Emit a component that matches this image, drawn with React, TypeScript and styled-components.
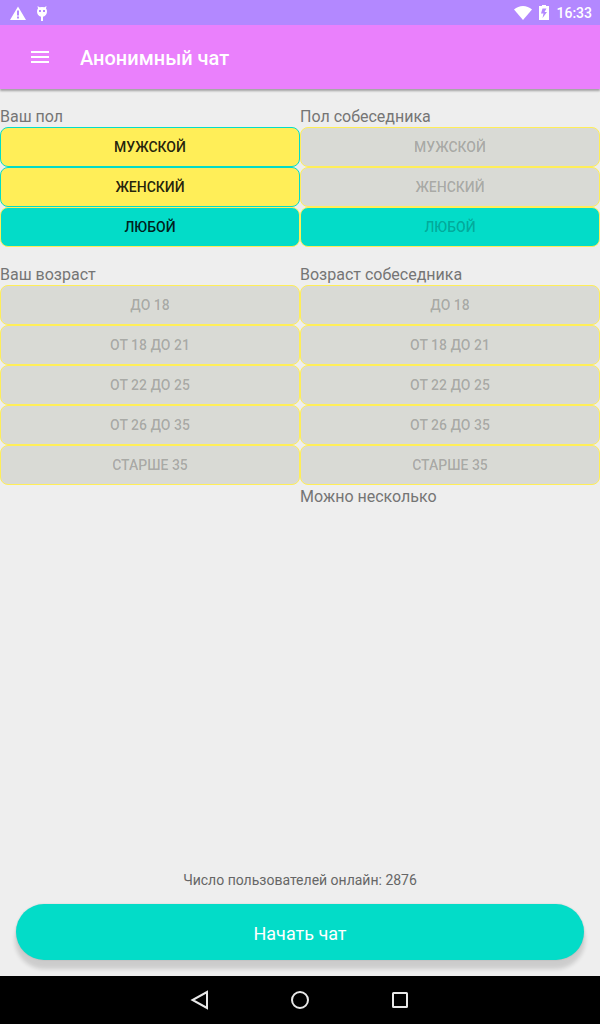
import React from "react";
import styled, { createGlobalStyle } from "styled-components";

const GlobalStyle = createGlobalStyle`
  * { box-sizing: border-box; }
  body {
    margin: 0;
    background: #eeeeee;
    font-family: Roboto, "Noto Sans", sans-serif;
  }
`;

const Screen = styled.div`
  display: flex;
  flex-direction: column;
  min-height: 100vh;
`;

const StatusBar = styled.div`
  display: flex;
  align-items: center;
  justify-content: space-between;
  height: 25px;
  padding: 0 8px;
  background: #b388ff;
  color: #ffffff;
  font-size: 14px;
  font-weight: 500;
  line-height: 25px;
`;

const StatusGroup = styled.div<{ $gap: number }>`
  display: flex;
  align-items: center;
  gap: ${(p) => p.$gap}px;
`;

const StatusIcon = styled.svg`
  display: block;
  fill: #ffffff;
`;

const Clock = styled.time`
  padding-top: 1px;
`;

const Toolbar = styled.header`
  display: flex;
  align-items: center;
  gap: 24px;
  height: 64px;
  padding: 0 24px;
  background: #ea80fc;
  box-shadow: 0 2px 2px rgba(0, 0, 0, 0.32);
`;

const MenuButton = styled.button`
  width: 32px;
  height: 32px;
  padding: 4px;
  border: 0;
  background: none;
`;

const Title = styled.h1`
  margin: 0;
  padding-top: 2px;
  color: #ffffff;
  font-size: 20px;
  font-weight: 500;
  line-height: 24px;
`;

const Main = styled.main`
  display: flex;
  flex: 1;
  flex-direction: column;
`;

const Pair = styled.div`
  display: grid;
  grid-template-columns: 1fr 1fr;
  align-items: start;
  padding-top: 16px;
`;

const Group = styled.div`
  display: flex;
  flex-direction: column;
`;

const Label = styled.div`
  padding-top: 2px;
  color: #757575;
  font-size: 16px;
  line-height: 20px;
`;

type Tone = "yellow" | "teal" | "gray";

const fills: Record<Tone, string> = {
  yellow: "#ffee58",
  teal: "#03dcc8",
  gray: "#d9dad5",
};

const Option = styled.button<{ $tone: Tone }>`
  height: 40px;
  padding: 0 8px;
  border: 1px solid ${(p) => (p.$tone === "yellow" ? "#03dcc8" : "#ffee58")};
  border-radius: 8px;
  background: ${(p) => fills[p.$tone]};
  color: rgba(0, 0, 0, 0.87);
  font-family: inherit;
  font-size: 14px;
  font-weight: 500;
  text-transform: uppercase;

  &:disabled {
    color: rgba(0, 0, 0, 0.24);
  }
`;

const Footer = styled.div`
  display: flex;
  flex-direction: column;
  gap: 14px;
  margin-top: auto;
  padding: 16px;
`;

const Online = styled.p`
  margin: 0;
  color: #666666;
  font-size: 14px;
  line-height: 20px;
  text-align: center;
`;

const StartButton = styled.button`
  height: 56px;
  padding: 2px 0 0;
  border: 0;
  border-radius: 28px;
  background: #03dcc8;
  box-shadow: 0 8px 4px 1px rgba(0, 0, 0, 0.14), 0 0 2px rgba(0, 0, 0, 0.14);
  color: #ffffff;
  font-family: inherit;
  font-size: 18px;
`;

const NavBar = styled.nav`
  position: relative;
  display: flex;
  justify-content: center;
  gap: 52px;
  height: 48px;
  background: #000000;
`;

const NavButton = styled.button`
  width: 48px;
  height: 48px;
  padding: 12px;
  border: 0;
  background: none;
`;

const NavIcon = styled.svg`
  display: block;
  fill: none;
  stroke: #e8e8e8;
  stroke-width: 2;
`;

interface Choice {
  text: string;
  tone: Tone;
}

const ages: Choice[] = ["До 18", "От 18 до 21", "От 22 до 25", "От 26 до 35", "Старше 35"].map(
  (text) => ({ text, tone: "gray" as Tone })
);

const ownSex: Choice[] = [
  { text: "Мужской", tone: "yellow" },
  { text: "Женский", tone: "yellow" },
  { text: "Любой", tone: "teal" },
];

const partnerSex: Choice[] = [
  { text: "Мужской", tone: "gray" },
  { text: "Женский", tone: "gray" },
  { text: "Любой", tone: "teal" },
];

interface ChoiceGroupProps {
  id: string;
  label: string;
  choices: Choice[];
  disabled?: boolean;
  note?: string;
}

function ChoiceGroup({ id, label, choices, disabled, note }: ChoiceGroupProps) {
  return (
    <Group role="group" aria-labelledby={id}>
      <Label id={id}>{label}</Label>
      {choices.map((c) => (
        <Option
          key={c.text}
          type="button"
          $tone={c.tone}
          disabled={disabled}
          aria-pressed={c.tone === "teal"}
        >
          {c.text}
        </Option>
      ))}
      {note && <Label>{note}</Label>}
    </Group>
  );
}

export default function App() {
  return (
    <Screen>
      <GlobalStyle />
      <StatusBar>
        <StatusGroup $gap={8}>
          <StatusIcon width="20" height="16" viewBox="0 0 20 16" aria-hidden="true">
            <path
              fillRule="evenodd"
              d="M2 15 10 1.500 18 15ZM9 5.500v5h2V5.500ZM9 11.500v2h2V11.500Z"
            />
          </StatusIcon>
          <StatusIcon width="12" height="16" viewBox="0 0 12 16" aria-hidden="true">
            <path
              fillRule="evenodd"
              d="M1.500 1 3.500 2.200Q6 1.600 8.500 2.200L10.500 1 10 3.500Q11 4.500 11 6.500 11 10.500 7 11.800V16.500H5V11.800Q1 10.500 1 6.500 1 4.500 2 3.500ZM3 5v2h2V5ZM7 5v2h2V5Z"
            />
          </StatusIcon>
        </StatusGroup>
        <StatusGroup $gap={7}>
          <StatusIcon width="18" height="16" viewBox="0 0 18 16" aria-hidden="true">
            <path d="M0 4.500Q4 1 9 1t9 3.500L9 15Z" />
          </StatusIcon>
          <StatusIcon width="10" height="16" viewBox="0 0 10 16" aria-hidden="true">
            <path
              fillRule="evenodd"
              d="M3 0h4V1h3v14H0V1h3ZM3.500 3.500 2 8.500h2.500L3.500 13 8 7H5.500L7.500 3.500Z"
            />
          </StatusIcon>
          <Clock>16:33</Clock>
        </StatusGroup>
      </StatusBar>
      <Toolbar>
        <MenuButton type="button" aria-label="Меню">
          <svg width="24" height="24" viewBox="0 0 24 24" fill="#ffffff" display="block">
            <path d="M3 6h18v2H3ZM3 11h18v2H3ZM3 16h18v2H3Z" />
          </svg>
        </MenuButton>
        <Title>Анонимный чат</Title>
      </Toolbar>
      <Main>
        <Pair>
          <ChoiceGroup id="own-sex" label="Ваш пол" choices={ownSex} />
          <ChoiceGroup id="partner-sex" label="Пол собеседника" choices={partnerSex} disabled />
        </Pair>
        <Pair>
          <ChoiceGroup id="own-age" label="Ваш возраст" choices={ages} disabled />
          <ChoiceGroup
            id="partner-age"
            label="Возраст собеседника"
            choices={ages}
            disabled
            note="Можно несколько"
          />
        </Pair>
        <Footer>
          <Online>Число пользователей онлайн: 2876</Online>
          <StartButton type="button">Начать чат</StartButton>
        </Footer>
      </Main>
      <NavBar>
        <NavButton type="button" aria-label="Назад">
          <NavIcon width="24" height="24" viewBox="0 0 24 24">
            <path d="M19 4v16L4.500 12Z" />
          </NavIcon>
        </NavButton>
        <NavButton type="button" aria-label="Домой">
          <NavIcon width="24" height="24" viewBox="0 0 24 24">
            <circle cx="12" cy="12" r="8" />
          </NavIcon>
        </NavButton>
        <NavButton type="button" aria-label="Недавние">
          <NavIcon width="24" height="24" viewBox="0 0 24 24">
            <rect x="5" y="5" width="14" height="14" rx="0.500" />
          </NavIcon>
        </NavButton>
      </NavBar>
    </Screen>
  );
}
